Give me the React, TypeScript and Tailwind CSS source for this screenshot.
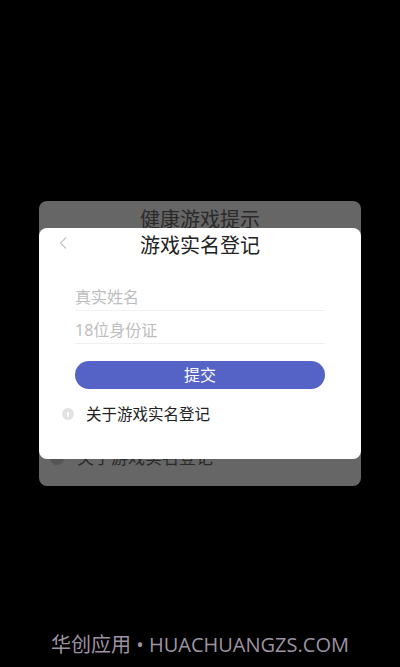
import React from "react";

const cjk = { fontFamily: '"Noto Sans", "Noto Sans CJK SC", sans-serif' };

export default function App() {
  return (
    <div className="w-full h-[667px] bg-black flex flex-col overflow-hidden" style={cjk}>
      <div className="pt-[201px] px-[39px]">
        <div className="relative h-[285px] rounded-[8px] bg-[#666666] flex flex-col">
          <div className="h-[38px] flex items-center justify-center text-[20px] leading-[28px] text-[#2a2a2a]">
            健康游戏提示
          </div>
          <div className="mt-auto mb-[16px] flex items-center pl-[11px] gap-[13px]">
            <span className="w-[14px] h-[14px] rounded-full bg-[#555555]" />
            <span className="text-[17px] leading-[24px] text-[#2a2a2a]">关于游戏实名登记</span>
          </div>

          <div className="absolute left-0 right-0 top-[27px] h-[231px] rounded-[8px] bg-white flex flex-col">
            <div className="relative h-[36px] flex items-center justify-center">
              <svg
                className="absolute left-[19px] top-[8px]"
                width="10"
                height="14"
                viewBox="0 0 10 14"
                fill="none"
              >
                <path d="M8 1.5 L2.5 7 L8 12.5" stroke="#c8c8c8" strokeWidth="1.4" />
              </svg>
              <span className="text-[20px] leading-[28px] text-[#222222]">游戏实名登记</span>
            </div>
            <div className="mt-[14px] px-[36px] flex flex-col">
              <div className="h-[33px] flex items-end pb-[3px] border-b border-[#f0f0f0]">
                <span className="text-[16px] leading-[20px] text-[#bdbdbd]">真实姓名</span>
              </div>
              <div className="h-[33px] flex items-end pb-[3px] border-b border-[#f0f0f0]">
                <span className="text-[16px] leading-[20px] text-[#bdbdbd]">18位身份证</span>
              </div>
              <div className="mt-[17px] h-[28px] rounded-full bg-[#5562c6] flex items-center justify-center text-white text-[16px] leading-[20px]">
                提交
              </div>
            </div>
            <div className="mt-[15px] pl-[23px] flex items-center gap-[12px]">
              <span className="w-[12px] h-[12px] rounded-full bg-[#e2e2e2] flex items-center justify-center">
                <span className="w-[1.5px] h-[5px] bg-white rounded" />
              </span>
              <span className="text-[15.5px] leading-[20px] text-[#222222]">关于游戏实名登记</span>
            </div>
          </div>
        </div>
      </div>
      <div className="mt-auto pb-[9px] flex justify-center">
        <span
          className="text-[20px] leading-[26px] text-[#9d93a3]"
          style={{ fontFamily: '"Open Sans", "Noto Sans CJK SC", sans-serif' }}
        >
          华创应用 • HUACHUANGZS.COM
        </span>
      </div>
    </div>
  );
}
